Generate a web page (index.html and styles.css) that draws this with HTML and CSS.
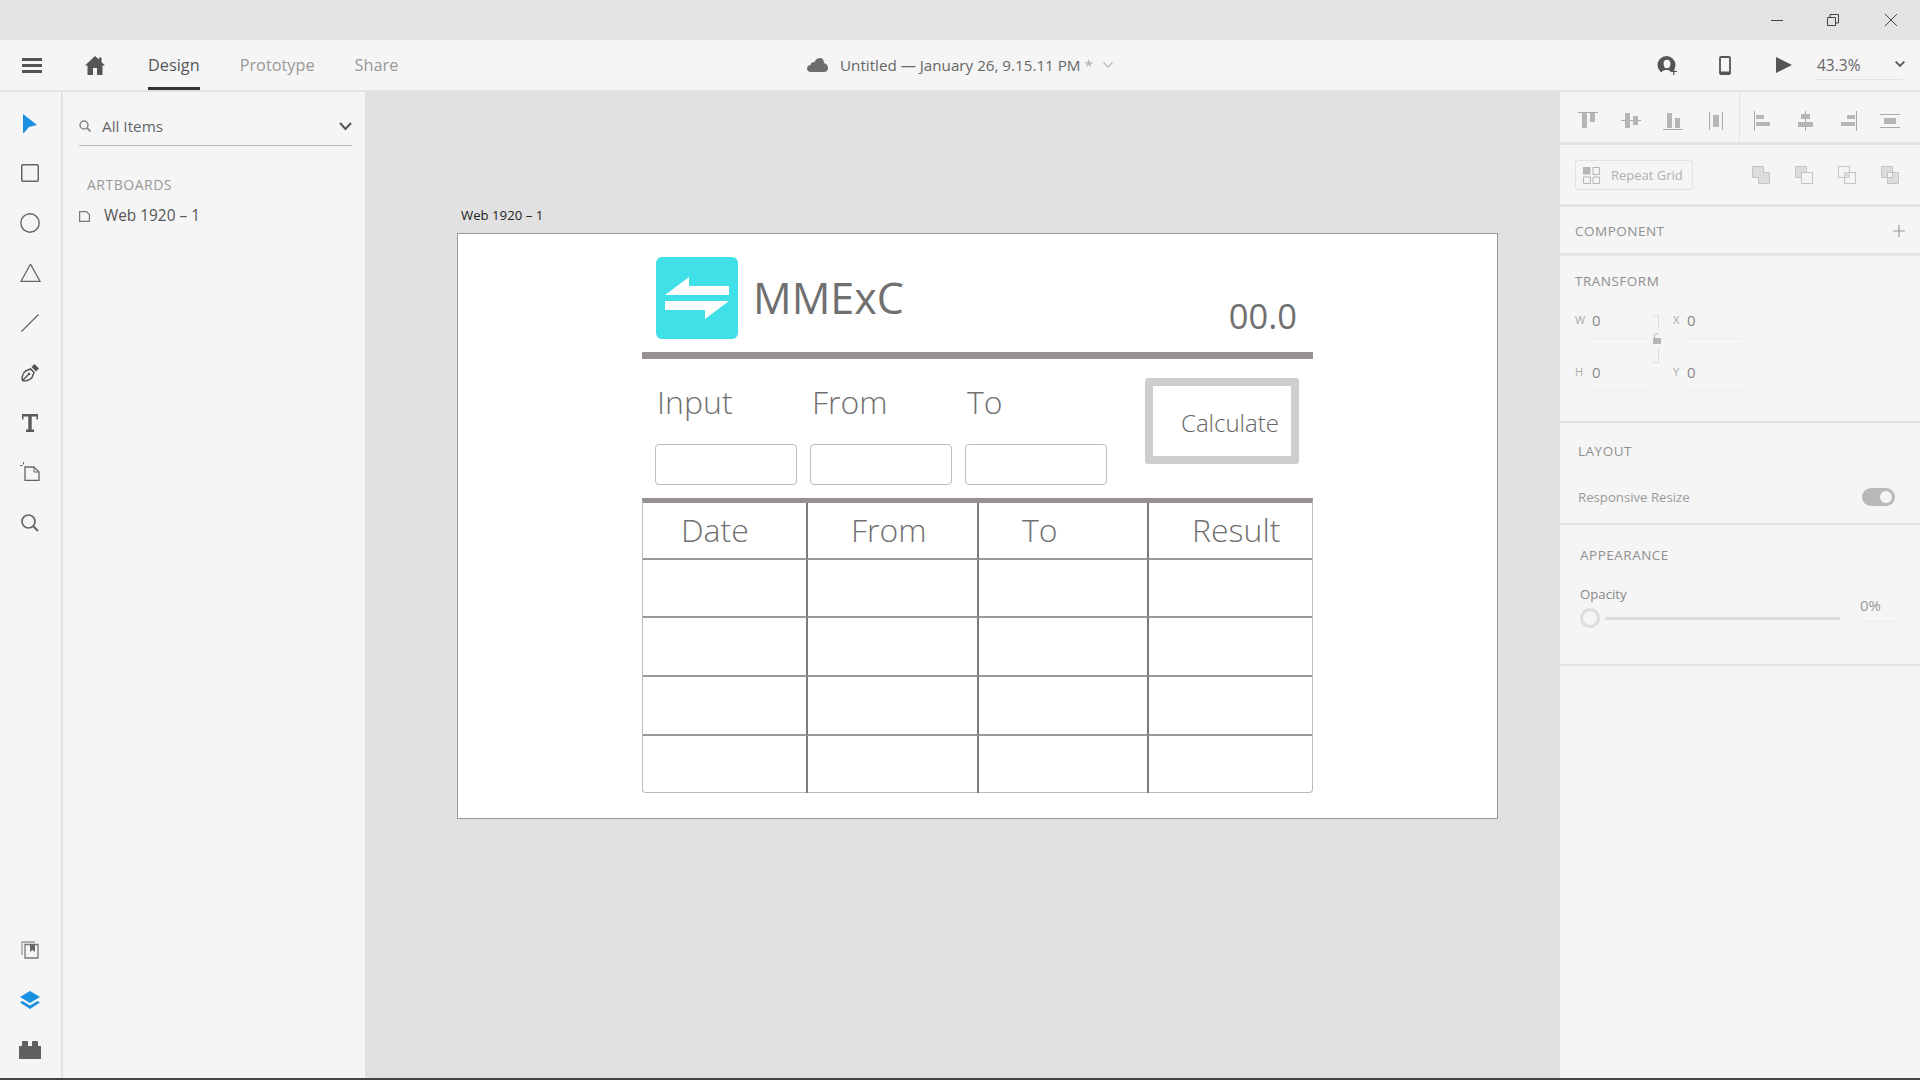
FILE: index.html
```html
<!DOCTYPE html>
<html>
<head>
<meta charset="utf-8">
<title>MMExC - Adobe XD</title>
<link rel="stylesheet" href="styles.css">
</head>
<body>

<!-- window title bar -->
<div class="titlebar">
  <svg class="winbtn win-min" width="12" height="12" viewBox="0 0 12 12"><path d="M0 6.500H12" stroke="#444" fill="none"/></svg>
  <svg class="winbtn" width="12" height="12" viewBox="0 0 12 12"><path d="M.5 3.500H8.500V11.500H.5ZM3 3.500V.5H11.500V9H8.500" stroke="#444" fill="none"/></svg>
  <svg class="winbtn" width="12" height="12" viewBox="0 0 12 12"><path d="M0 0L12 12M12 0L0 12" stroke="#444" fill="none"/></svg>
</div>

<!-- top nav -->
<div class="navbar">
  <div class="nav-left">
    <svg class="nav-menu" width="20" height="15" viewBox="0 0 20 15"><path d="M0 0H20V3H0ZM0 6H20V9H0ZM0 12H20V15H0Z" fill="#555"/></svg>
    <svg class="nav-home" width="20" height="19" viewBox="0 0 20 19"><path d="M10 0L14 3.600V1.500H16.500V5.900L20 9.500H17.500V19H12V12H8V19H2.500V9.500H0Z" fill="#555"/></svg>
    <a class="tab active">Design</a>
    <a class="tab">Prototype</a>
    <a class="tab">Share</a>
  </div>
  <div class="doc-title">
    <svg width="21" height="14" viewBox="0 0 21 14"><path d="M4 14C1.500 14 0 12.500 0 10.500 0 8.500 1.500 7.200 3.500 7 4 4.500 6 3.500 7.500 4 8.500 1.500 10.500 0 13 0 15.500 0 17 2 17 5 19.500 5.500 21 7.500 21 10 21 12.500 19.500 14 17 14Z" fill="#6e6e6e"/></svg>
    <span class="doc-name">Untitled — January 26, 9.15.11 PM <i>*</i></span>
    <svg width="10" height="6" viewBox="0 0 10 6"><path d="M.5 .5L5 5 9.500 .5" stroke="#bbb" stroke-width="1.300" fill="none"/></svg>
  </div>
  <div class="nav-right">
    <svg class="nav-user" width="21" height="19" viewBox="0 0 21 19"><circle cx="9.500" cy="9" r="9" fill="#555"/><ellipse cx="10" cy="8" rx="3.400" ry="4.200" fill="#f5f5f5"/><path d="M5 15.500C7 13.500 12 13.500 14 15.500L14 19H5Z" fill="#f5f5f5"/><path d="M13.500 15.500H20M16.800 12.500V19" stroke="#555" stroke-width="1.200"/></svg>
    <svg class="nav-phone" width="12" height="19" viewBox="0 0 12 19"><rect x="1" y="1" width="10" height="17" rx="1" fill="none" stroke="#555" stroke-width="1.800"/><path d="M1 15.500H11V18H1Z" fill="#555"/></svg>
    <svg class="nav-play" width="16" height="16" viewBox="0 0 16 16"><path d="M0 0L16 8 0 16Z" fill="#555"/></svg>
    <div class="zoom-box">
      <span>43.3%</span>
      <svg width="10" height="7" viewBox="0 0 10 7"><path d="M.7 .7L5 5 9.300 .7" stroke="#555" stroke-width="1.800" fill="none"/></svg>
    </div>
  </div>
</div>

<div class="main">

  <!-- tool rail -->
  <div class="tools">
    <div class="tool-group">
      <div class="tool"><svg width="14" height="20" viewBox="0 -1 14 20"><path d="M0 0L14 11 6 13 0 20Z" fill="#1b8fe0"/></svg></div>
      <div class="tool"><svg width="18" height="18" viewBox="0 0 18 18"><rect x=".75" y=".75" width="16.500" height="16.500" rx="1" fill="none" stroke="#666" stroke-width="1.500"/></svg></div>
      <div class="tool"><svg width="20" height="20" viewBox="0 0 20 20"><circle cx="10" cy="10" r="9.200" fill="none" stroke="#666" stroke-width="1.400"/></svg></div>
      <div class="tool"><svg width="21" height="19" viewBox="0 1 21 19"><path d="M10.500 1.200L20 18.300H1Z" fill="none" stroke="#666" stroke-width="1.300"/></svg></div>
      <div class="tool"><svg width="18" height="18" viewBox="0 0 18 18"><path d="M.5 17.500L17.500 .5" stroke="#666" stroke-width="1.300"/></svg></div>
      <div class="tool"><svg width="19" height="19" viewBox="0 1 19 19"><path d="M1.500 17.500C.5 14 2 10 4.500 8L9.500 6 13 9.500 11 14.500C9 17 5 18.500 1.500 17.500ZM1.500 17.500L7 12" fill="none" stroke="#555" stroke-width="1.500"/><circle cx="8" cy="11" r="1.300" fill="#555"/><path d="M10.500 4L13.500 1 18 5.500 15 8.500Z" fill="#555"/></svg></div>
      <div class="tool"><svg width="16" height="18" viewBox="0 0 16 18"><path d="M0 0H16V5.500H14.500V2.500H9.700V15.500H12V18H4V15.500H6.300V2.500H1.500V5.500H0Z" fill="#5a5a5a"/></svg></div>
      <div class="tool"><svg class="tool-board" width="21" height="20" viewBox="1 0 21 20"><path d="M6 6H15L20 11V19.500H6Z" fill="none" stroke="#666" stroke-width="1.300"/><path d="M15 6V11H20" fill="none" stroke="#666"/><path d="M1 4.500H3.500M4.500 1V3.500" stroke="#666"/></svg></div>
      <div class="tool"><svg width="18" height="18" viewBox="0 0 18 18"><circle cx="7.500" cy="7.500" r="6.500" fill="none" stroke="#666" stroke-width="1.700"/><path d="M12 12L17 17" stroke="#666" stroke-width="2"/></svg></div>
    </div>
    <div class="tool-group">
      <div class="tool"><svg width="18" height="18" viewBox="0 0 18 18"><path d="M4 3.500H17V17H4Z" fill="none" stroke="#777" stroke-width="1.300"/><path d="M1 14V1H14" fill="none" stroke="#999" stroke-width="1.300"/><path d="M9 3.500H14V11L11.500 9 9 11Z" fill="#666"/></svg></div>
      <div class="tool"><svg width="20" height="18" viewBox="0 0 20 18"><path d="M10 0L20 6 10 12 0 6Z" fill="#1b8fe0"/><path d="M2.500 10L0 11.500 10 18 20 11.500 17.500 10 10 14.500Z" fill="#1b8fe0"/></svg></div>
      <div class="tool"><svg width="22" height="18" viewBox="0 0 22 18"><path d="M0 5H3V1C3 .4 3.400 0 4 0H8C8.600 0 9 .4 9 1V5H13V1C13 .4 13.400 0 14 0H18C18.600 0 19 .4 19 1V5H22V18H0Z" fill="#5f5f5f"/></svg></div>
    </div>
  </div>

  <!-- layers panel -->
  <div class="layers">
    <div class="search-row">
      <svg width="12" height="12" viewBox="0 0 12 12"><circle cx="5" cy="5" r="4" fill="none" stroke="#888" stroke-width="1.500"/><path d="M8 8L11.500 11.500" stroke="#888" stroke-width="1.800"/></svg>
      <span class="search-text">All Items</span>
      <svg class="search-chev" width="13" height="9" viewBox="0 0 13 9"><path d="M1 1L6.500 7 12 1" stroke="#555" stroke-width="2" fill="none"/></svg>
    </div>
    <div class="layers-head">ARTBOARDS</div>
    <div class="layer-item">
      <svg width="11" height="11" viewBox="0 0 11 11"><path d="M.6 .6H7.500L10.400 3.500V10.400H.6Z" fill="none" stroke="#777" stroke-width="1.200"/></svg>
      <span>Web 1920 – 1</span>
    </div>
  </div>

  <!-- canvas with the artboard on it -->
  <div class="canvas">
    <div class="board-label">Web 1920 – 1</div>
    <div class="artboard">
      <div class="sheet">
        <div class="app-head">
          <svg class="logo" width="82" height="82" viewBox="0 0 82 82">
            <rect width="82" height="82" rx="6" fill="#40e0e8"/>
            <path d="M9 38L33 20V29H73V38ZM9 44H73L49 62V53H9Z" fill="#fff"/>
          </svg>
          <div class="app-name">MMExC</div>
          <div class="app-total">00.0</div>
        </div>

        <div class="form-row">
          <div class="fields">
            <div class="field"><label>Input</label><div class="inp"></div></div>
            <div class="field"><label>From</label><div class="inp"></div></div>
            <div class="field"><label>To</label><div class="inp"></div></div>
          </div>
          <div class="calc"><span>Calculate</span></div>
        </div>

        <div class="grid">
          <div class="cell hd c-date">Date</div>
          <div class="cell hd c-from">From</div>
          <div class="cell hd c-to">To</div>
          <div class="cell hd c-res">Result</div>
          <div class="cell"></div><div class="cell"></div><div class="cell"></div><div class="cell"></div>
          <div class="cell"></div><div class="cell"></div><div class="cell"></div><div class="cell"></div>
          <div class="cell"></div><div class="cell"></div><div class="cell"></div><div class="cell"></div>
          <div class="cell"></div><div class="cell"></div><div class="cell"></div><div class="cell"></div>
        </div>
      </div>
    </div>
  </div>

  <!-- property inspector -->
  <div class="props">
    <div class="sec sec-align">
      <div class="align-group">
        <svg width="20" height="18" viewBox="0 0 20 18"><path d="M0 .5H20" stroke="#aaa"/><path d="M4 1H9V16H4ZM12 1H17V10H12Z" fill="#b5b5b5"/></svg>
        <svg width="20" height="18" viewBox="0 0 20 18"><path d="M0 8.500H20" stroke="#aaa"/><path d="M4 1H9V16H4ZM12 4H17V13H12Z" fill="#b5b5b5"/></svg>
        <svg width="20" height="18" viewBox="0 0 20 18"><path d="M0 17.500H20" stroke="#aaa"/><path d="M4 1H9V16H4ZM12 6H17V16H12Z" fill="#b5b5b5"/></svg>
        <svg width="20" height="18" viewBox="0 0 20 18"><path d="M3.500 0V20M16.500 0V20" stroke="#aaa"/><path d="M7 3H13V15H7Z" fill="#b5b5b5"/></svg>
      </div>
      <div class="align-group group-b">
        <svg width="20" height="20" viewBox="0 0 20 20"><path d="M1.500 0V20" stroke="#aaa"/><path d="M3 4H11V8H3ZM3 11H17V15H3Z" fill="#b5b5b5"/></svg>
        <svg width="20" height="20" viewBox="0 0 20 20"><path d="M10.500 0V20" stroke="#aaa"/><path d="M6 3H15V8H6ZM3 11H18V16H3Z" fill="#b5b5b5"/></svg>
        <svg width="20" height="20" viewBox="0 0 20 20"><path d="M18.500 0V20" stroke="#aaa"/><path d="M9 4H17V8H9ZM3 11H17V15H3Z" fill="#b5b5b5"/></svg>
        <svg width="20" height="14" viewBox="0 0 20 14"><path d="M0 .5H20M0 13.500H20" stroke="#aaa"/><path d="M4 4H16V10H4Z" fill="#b5b5b5"/></svg>
      </div>
    </div>

    <div class="sec sec-tools">
      <div class="repeat-btn">
        <svg width="17" height="17" viewBox="0 0 17 17"><path d="M0 0H7.500V7.500H0Z" fill="#b5b5b5"/><path d="M10 .5H16.500V7.500H10ZM.5 10H7.500V16.500H.5ZM10 10H16.500V16.500H10Z" fill="none" stroke="#b5b5b5"/></svg>
        <span>Repeat Grid</span>
      </div>
      <div class="bool-group">
        <svg width="18" height="18" viewBox="0 0 18 18"><path d="M.5 .5H11.500V6.500H17.500V17.500H6.500V11.500H.5Z" fill="#dcdcdc" stroke="#c4c4c4"/></svg>
        <svg width="18" height="18" viewBox="0 0 18 18"><path d="M.5 .5H11.500V6.500H6.500V11.500H.5Z" fill="#dcdcdc" stroke="#c4c4c4"/><rect x="6.500" y="6.500" width="11" height="11" fill="#f5f5f5" stroke="#c4c4c4"/></svg>
        <svg width="18" height="18" viewBox="0 0 18 18"><rect x=".5" y=".5" width="11" height="11" fill="none" stroke="#c4c4c4"/><rect x="6.500" y="6.500" width="11" height="11" fill="none" stroke="#c4c4c4"/><rect x="6.500" y="6.500" width="5" height="5" fill="#dcdcdc"/></svg>
        <svg width="18" height="18" viewBox="0 0 18 18"><path d="M.5 .5H11.500V6.500H6.500V11.500H.5Z" fill="#dcdcdc" stroke="#c4c4c4"/><path d="M6.500 6.500H11.500V11.500H6.500Z" fill="none" stroke="#c4c4c4"/><path d="M11.500 6.500H17.500V17.500H6.500V11.500H11.500Z" fill="#dcdcdc" stroke="#c4c4c4"/></svg>
      </div>
    </div>

    <div class="sec sec-comp">
      <span class="sec-title">COMPONENT</span>
      <svg width="12" height="12" viewBox="0 0 12 12"><path d="M6 0V12M0 6H12" stroke="#999" stroke-width="1.200"/></svg>
    </div>

    <div class="sec sec-transform">
      <div class="sec-title">TRANSFORM</div>
      <div class="xf-grid">
        <span class="xf-label">W</span><span class="xf-val">0</span><span></span><span class="xf-label">X</span><span class="xf-val">0</span>
        <span class="xf-label">H</span><span class="xf-val">0</span><span></span><span class="xf-label">Y</span><span class="xf-val">0</span>
        <svg class="xf-lock" width="10" height="48" viewBox="0 0 10 48"><path d="M1 .5H6.500V14M1 47.500H6.500V33" stroke="#ddd" fill="none"/><path d="M1 23H9V29H1Z" fill="#b5b5b5"/><path d="M2.500 23V20.500C2.500 18 6.500 18 6.500 20" stroke="#b5b5b5" fill="none"/></svg>
      </div>
    </div>

    <div class="sec sec-layout">
      <div class="sec-title">LAYOUT</div>
      <div class="resize-row">
        <span>Responsive Resize</span>
        <div class="toggle"><div class="knob"></div></div>
      </div>
    </div>

    <div class="sec sec-appear">
      <div class="sec-title">APPEARANCE</div>
      <div class="opacity-label">Opacity</div>
      <div class="opacity-row">
        <div class="thumb"></div>
        <div class="track"></div>
        <div class="pct">0%</div>
      </div>
    </div>
  </div>

</div>
<div class="bottom-line"></div>

</body>
</html>
```

FILE: styles.css
```css
* {
    box-sizing: border-box;
}
html, body {
    margin: 0;
    height: 1080px;
    overflow: hidden;
}
body {
    display: flex;
    flex-direction: column;
    background-color: #f5f5f5;
    font-family: "Open Sans", "Noto Sans", sans-serif;
    color: #666;
}
svg {
    display: block;
    flex: none;
}

/* title bar */
.titlebar {
    height: 40px;
    background-color: #e3e3e3;
    display: flex;
    justify-content: flex-end;
    align-items: center;
    gap: 46px;
    padding: 0 23px 0 0;
}
.win-min {
    margin-right: -2px;
}

/* nav */
.navbar {
    height: 52px;
    border-bottom: 2px solid #e3e3e3;
    position: relative;
    display: flex;
    justify-content: space-between;
    align-items: center;
}
.nav-left {
    display: flex;
    align-items: center;
    height: 50px;
    padding-left: 22px;
}
.nav-home {
    margin: 0 43px 0 43px;
}
.tab {
    font-size: 16.3px;
    color: #999;
    line-height: 50px;
    height: 50px;
    margin-right: 40px;
    border-bottom: 3px solid transparent;
}
.tab.active {
    color: #555;
    border-bottom-color: #333;
}
.doc-title {
    position: absolute;
    left: 807px;
    top: 0;
    height: 50px;
    display: flex;
    align-items: center;
}
.doc-name {
    font-size: 15.2px;
    color: #666;
    margin: 0 10px 0 12px;
}
.doc-name i {
    font-style: normal;
    color: #aaa;
}
.nav-right {
    display: flex;
    align-items: center;
    height: 50px;
    padding-right: 17px;
}
.nav-phone {
    margin-left: 41px;
}
.nav-play {
    margin-left: 45px;
}
.zoom-box {
    width: 87px;
    height: 29px;
    margin-left: 24px;
    border-bottom: 1px solid #e3e3e3;
    display: flex;
    justify-content: space-between;
    align-items: center;
    font-size: 15.5px;
}
.zoom-box span {
    margin-left: 1px;
}
.zoom-box svg {
    margin-right: -2px;
}

/* main row */
.main {
    flex: 1;
    display: flex;
    min-height: 0;
}
.tools {
    width: 63px;
    border-right: 2px solid #e3e3e3;
    display: flex;
    flex-direction: column;
    justify-content: space-between;
    padding: 6px 1px 3px 0;
}
.tool {
    height: 50px;
    display: flex;
    justify-content: center;
    align-items: center;
}
.tool-board {
    margin-bottom: 5px;
}

/* layers */
.layers {
    width: 302px;
    padding: 0 13px 0 16px;
}
.search-row {
    height: 54px;
    border-bottom: 1px solid #bdbdbd;
    display: flex;
    align-items: center;
    padding-top: 15px;
}
.search-text {
    font-size: 15.3px;
    color: #666;
    margin-left: 11px;
}
.search-chev {
    margin-left: auto;
}
.layers-head {
    margin: 29px 0 0 8px;
    font-size: 14px;
    line-height: 20px;
    letter-spacing: .5px;
    color: #999;
}
.layer-item {
    margin-top: 9px;
    display: flex;
    align-items: center;
    font-size: 15.4px;
    line-height: 24px;
    color: #555;
}
.layer-item span {
    margin-left: 14px;
}

/* canvas */
.canvas {
    flex: 1;
    background-color: #e1e1e1;
    position: relative;
}
.board-label {
    position: absolute;
    left: 96px;
    top: 113px;
    font-size: 13.2px;
    line-height: 20px;
    color: #222;
}
.artboard {
    position: absolute;
    left: 92px;
    top: 141px;
    width: 1041px;
    height: 586px;
    background-color: #fff;
    border: 1px solid #999;
    padding-left: 184px;
}
.sheet {
    width: 671px;
}
.app-head {
    height: 125px;
    border-bottom: 7px solid #969292;
    display: flex;
    padding: 23px 16px 0 14px;
}
.app-name {
    font-size: 43px;
    line-height: 56px;
    margin: 13px 0 0 15px;
    color: #707070;
}
.app-total {
    margin: 37px 0 0 auto;
    font-size: 34.5px;
    line-height: 44px;
    color: #707070;
}

/* inputs row */
.form-row {
    height: 139px;
    display: flex;
    padding-left: 13px;
}
.fields {
    display: grid;
    grid-template-columns: repeat(3, 142px);
    column-gap: 13px;
}
.field label {
    display: block;
    height: 85px;
    padding: 21px 0 0 2px;
    font-size: 32px;
    line-height: 44px;
    font-weight: 300;
    color: #707070;
}
.inp {
    height: 41px;
    border: 1px solid #bbb;
    border-radius: 4px;
}
.calc {
    margin: 19px 0 0 38px;
    width: 154px;
    height: 86px;
    border: 8px solid #cecece;
    border-radius: 3px;
    font-size: 24px;
    line-height: 34px;
    font-weight: 300;
    color: #666;
    padding: 20px 0 0 28px;
}

/* table */
.grid {
    display: grid;
    grid-template-columns: 165px 171px 170px 163px;
    grid-template-rows: 57px 58px 59px 59px 57px;
    height: 295px;
    border: 1px solid #bbb;
    border-top: 5px solid #969292;
    border-radius: 0 0 4px 4px;
}
.cell {
    border-right: 2px solid #7a7a7a;
    border-bottom: 2px solid #999;
}
.cell:nth-child(4n) {
    border-right: 0;
}
.cell:nth-last-child(-n+4) {
    border-bottom: 0;
}
.hd {
    font-size: 32px;
    line-height: 54px;
    font-weight: 300;
    color: #707070;
}
.c-date { padding-left: 38px; }
.c-from { padding-left: 43px; }
.c-to { padding-left: 43px; }
.c-res { padding-left: 43px; }

/* inspector */
.props {
    width: 360px;
    font-size: 14px;
    color: #aaa;
}
.sec {
    border-bottom: 2px solid #e3e3e3;
}
.sec-title {
    font-size: 13.5px;
    line-height: 20px;
    letter-spacing: .5px;
    color: #8f8f8f;
}
.sec-align {
    height: 53px;
    display: flex;
    border-bottom-width: 3px;
}
.align-group {
    width: 180px;
    display: flex;
    justify-content: space-between;
    align-items: center;
    padding: 8px 13px 0 18px;
    border-right: 1px solid #e3e3e3;
}
.group-b {
    padding: 8px 20px 0 13px;
    border-right: 0;
}
.sec-tools {
    height: 62px;
    display: flex;
    align-items: center;
    justify-content: space-between;
    padding: 1px 21px 0 15px;
    border-bottom-width: 3px;
}
.repeat-btn {
    width: 118px;
    height: 30px;
    border: 1px solid #e3e3e3;
    border-radius: 3px;
    display: flex;
    align-items: center;
    padding-left: 7px;
    font-size: 13px;
    color: #b0b0b0;
}
.repeat-btn span {
    margin-left: 11px;
}
.bool-group {
    display: flex;
    gap: 25px;
}
.sec-comp {
    height: 49px;
    display: flex;
    align-items: center;
    justify-content: space-between;
    padding: 2px 15px 0;
    border-bottom-width: 3px;
}
.sec-transform {
    height: 167px;
    padding: 15px 15px 0;
}
.xf-grid {
    position: relative;
    margin-top: 16px;
    display: grid;
    grid-template-columns: 17px 56px 25px 14px 55px;
    grid-auto-rows: 32px;
    row-gap: 20px;
    width: 167px;
}
.xf-label {
    font-size: 11px;
    line-height: 26px;
    color: #aaa;
}
.xf-val {
    border-bottom: 1px solid #ebebeb;
    font-size: 15px;
    line-height: 26px;
    color: #888;
}
.xf-lock {
    position: absolute;
    left: 77px;
    top: 8px;
}
.sec-layout {
    height: 102px;
    padding: 18px 18px 0;
}
.resize-row {
    margin-top: 27px;
    display: flex;
    justify-content: space-between;
    align-items: center;
    padding-right: 7px;
    font-size: 13.2px;
    color: #999;
}
.toggle {
    width: 33px;
    height: 18px;
    background-color: #b9b9b9;
    border-radius: 9px;
    padding: 3px 3px 3px 18px;
}
.knob {
    width: 12px;
    height: 12px;
    border-radius: 50%;
    background-color: #f5f5f5;
}
.sec-appear {
    height: 141px;
    padding: 20px 20px 0;
}
.opacity-label {
    margin-top: 19px;
    font-size: 13.2px;
    line-height: 20px;
    color: #888;
}
.opacity-row {
    display: flex;
    align-items: center;
    margin-top: 4px;
    position: relative;
}
.thumb {
    width: 20px;
    height: 20px;
    border: 3px solid #ddd;
    border-radius: 50%;
}
.track {
    width: 235px;
    height: 3px;
    background-color: #dcdcdc;
    margin-left: 5px;
}
.pct {
    position: absolute;
    left: 280px;
    top: -16px;
    width: 40px;
    height: 30px;
    border-bottom: 1px solid #ebebeb;
    font-size: 15px;
    line-height: 26px;
    color: #999;
}

.bottom-line {
    height: 2px;
    background-color: #444;
}
```
